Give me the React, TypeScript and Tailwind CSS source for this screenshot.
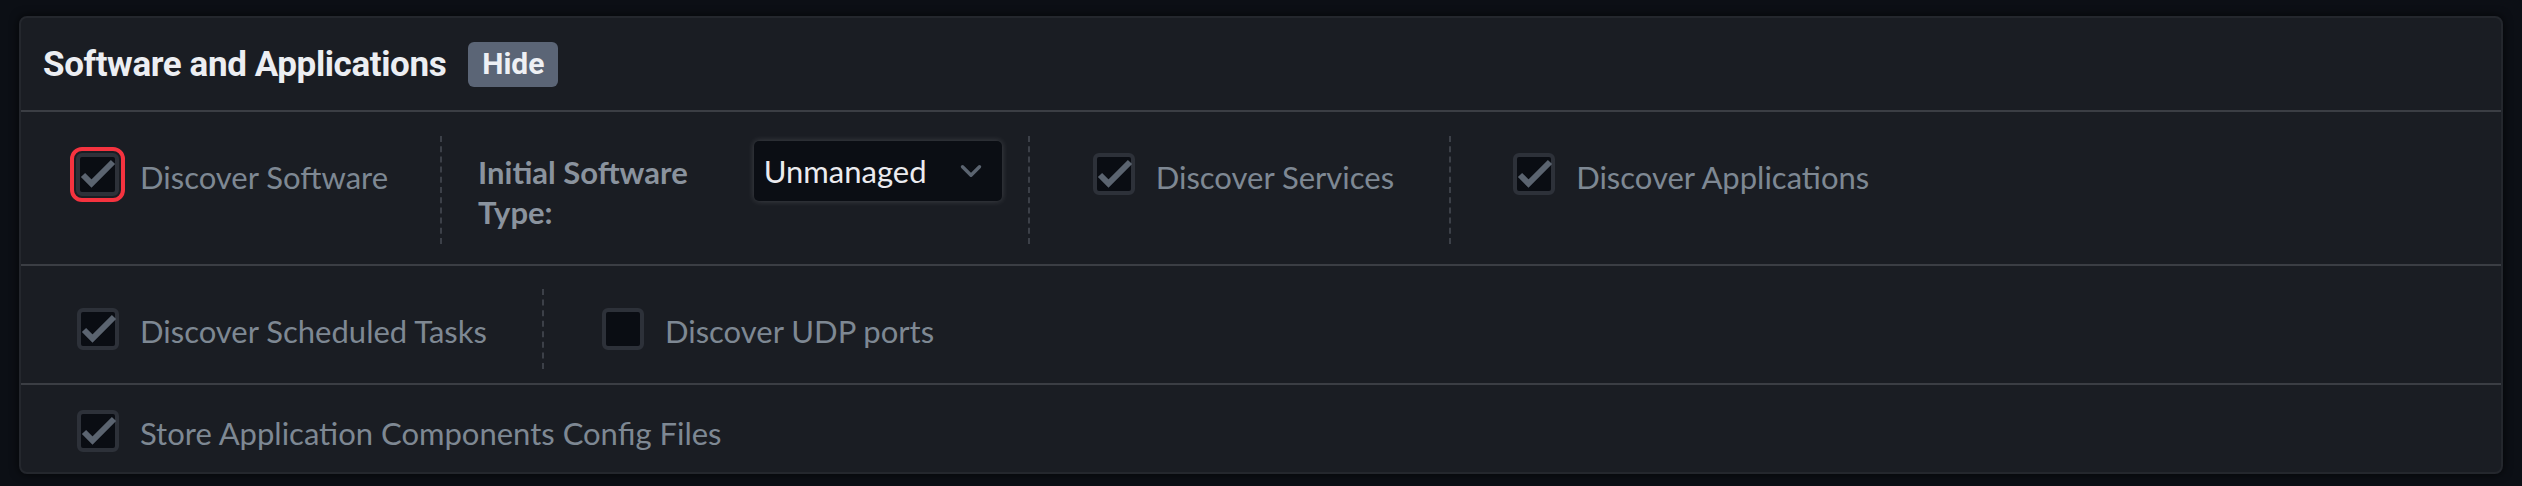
import { ChevronDown } from "lucide-react";

const labelFont = { fontFamily: "Lato, 'Noto Sans', sans-serif" };

function Checkbox({ checked, focused }: { checked?: boolean; focused?: boolean }) {
  return (
    <div
      className={
        focused
          ? "relative shrink-0 w-[43px] h-[43px] rounded-[6px] border-[4px] border-[#2d3139] bg-[#0a0d13] outline-[4px] outline-solid outline-[#f5333f] outline-offset-[2px]"
          : "relative shrink-0 w-[42px] h-[42px] rounded-[6px] border-[4px] border-[#2d3139] bg-[#0a0d13]"
      }
    >
      {checked && (
        <svg viewBox="0 0 43 43" className="absolute -left-[4px] -top-[4px] w-[43px] h-[43px] overflow-visible">
          <path
            d="M7 22 L15.5 30.5 L37 9"
            fill="none"
            stroke="#5b6470"
            strokeWidth="6"
            strokeLinecap="butt"
            strokeLinejoin="miter"
          />
        </svg>
      )}
    </div>
  );
}

function CheckItem({
  label,
  checked,
  focused,
}: {
  label: string;
  checked?: boolean;
  focused?: boolean;
}) {
  return (
    <div className="flex items-center gap-[21px]">
      <Checkbox checked={checked} focused={focused} />
      <span className="pt-[6px] text-[31px] leading-none text-[#7e8893] whitespace-nowrap" style={labelFont}>
        {label}
      </span>
    </div>
  );
}

function Dashed({ h }: { h: string }) {
  return <div className={`shrink-0 border-l-2 border-dashed border-[#3c4048] ${h}`} />;
}

export default function App() {
  return (
    <div className="h-[486px] w-full bg-[#0c0f15] pt-[16px] px-[19px] pb-[12px]">
      <div className="h-[458px] flex flex-col rounded-[8px] bg-[#1a1d23] border-2 border-[#24272d] shadow-[0_0_10px_rgba(0,0,0,0.7)] overflow-hidden">
        {/* header */}
        <div className="h-[92px] shrink-0 flex items-center pl-[22px] gap-[22px]">
          <h2
            className="text-[35px] font-bold text-[#eceef2] tracking-[-0.4px] leading-none"
            style={{ fontFamily: "Roboto, 'Noto Sans', sans-serif" }}
          >
            Software and Applications
          </h2>
          <span
            className="h-[45px] px-[14px] flex items-center rounded-[6px] bg-[#5b6576] text-[30px] font-bold text-[#eef0f4] leading-none"
            style={{ fontFamily: "Roboto, 'Noto Sans', sans-serif" }}
          >
            Hide
          </span>
        </div>
        <div className="h-[2px] shrink-0 bg-[#3b3e44]" />

        {/* row 1 */}
        <div className="h-[152px] shrink-0 flex items-start pt-[24px] pl-[55px]">
          <div className="pt-[17px] pr-[52px]">
            <CheckItem label="Discover Software" checked focused />
          </div>
          <Dashed h="h-[108px]" />
          <div className="flex items-start gap-[66px] pl-[36px] pr-[26px]">
            <span
              className="mt-[16px] text-[31px] leading-[40px] font-bold text-[#8a939e]"
              style={labelFont}
            >
              Initial Software
              <br />
              Type:
            </span>
            <div className="mt-[5px] w-[248px] h-[60px] flex items-center justify-between pl-[10px] pr-[14px] rounded-[5px] bg-[#0b0e14] shadow-[0_0_6px_rgba(255,255,255,0.18)]">
              <span className="text-[31px] leading-none text-[#ebebef]" style={labelFont}>
                Unmanaged
              </span>
              <ChevronDown className="w-[34px] h-[34px] text-[#5b6470]" strokeWidth={2.4} />
            </div>
          </div>
          <Dashed h="h-[108px]" />
          <div className="pt-[17px] pl-[63px] pr-[55px]">
            <CheckItem label="Discover Services" checked />
          </div>
          <Dashed h="h-[108px]" />
          <div className="pt-[17px] pl-[62px]">
            <CheckItem label="Discover Applications" checked />
          </div>
        </div>
        <div className="h-[2px] shrink-0 bg-[#3b3e44]" />

        {/* row 2 */}
        <div className="h-[117px] shrink-0 flex items-center pt-[8px] pl-[56px]">
          <div className="pr-[55px]">
            <CheckItem label="Discover Scheduled Tasks" checked />
          </div>
          <Dashed h="h-[80px]" />
          <div className="pl-[58px]">
            <CheckItem label="Discover UDP ports" />
          </div>
        </div>
        <div className="h-[2px] shrink-0 bg-[#3b3e44]" />

        {/* row 3 */}
        <div className="flex-1 flex items-center pt-[4px] pl-[56px]">
          <CheckItem label="Store Application Components Config Files" checked />
        </div>
      </div>
    </div>
  );
}
